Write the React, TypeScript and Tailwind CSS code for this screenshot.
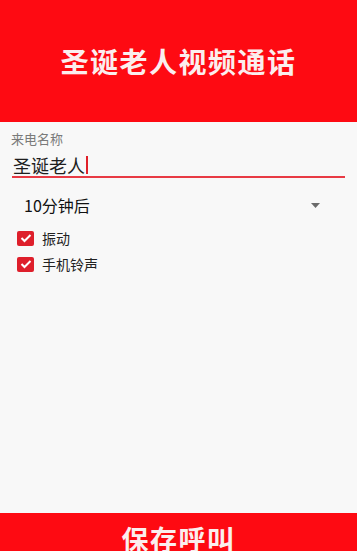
const font = "font-['Noto_Sans_CJK_SC','Noto_Sans',sans-serif]";

function CheckBox({ label }: { label: string }) {
  return (
    <div className="flex items-center h-[26px]">
      <div className="ml-[17px] w-[17px] h-[15px] rounded-[2px] bg-[#de1f2b] flex items-center justify-center">
        <svg width="12" height="10" viewBox="0 0 12 10" fill="none">
          <path d="M1.5 5 L4.5 8 L10.5 2" stroke="#ffffff" strokeWidth="2" />
        </svg>
      </div>
      <span className="ml-[8px] text-[14px] leading-none text-[#222]">{label}</span>
    </div>
  );
}

export default function App() {
  return (
    <div className={`h-[551px] w-full flex flex-col overflow-hidden bg-[#f8f8f8] ${font}`}>
      {/* Header */}
      <div className="h-[122px] bg-[#fe0a12] flex items-center justify-center shrink-0">
        <h1 className="text-[28px] font-bold text-[#fbeeee] tracking-[1.5px] leading-none">
          圣诞老人视频通话
        </h1>
      </div>

      {/* Form */}
      <div className="flex-1 flex flex-col">
        <p className="mt-[10px] ml-[11px] text-[13px] leading-[14px] text-[#7a7a7a]">来电名称</p>
        <div className="mx-[12px] mt-[7px] h-[25px] border-b-2 border-[#e83a44] flex items-center">
          <span className="ml-[1px] text-[18px] leading-none text-[#1e1e1e]">圣诞老人</span>
          <span className="ml-[1px] w-[2px] h-[18px] bg-[#e0202a]" />
        </div>

        <div className="mt-[15px] h-[24px] flex items-center justify-between">
          <span className="ml-[24px] text-[16px] leading-none text-[#111]">10分钟后</span>
          <svg className="mr-[37px]" width="9" height="5" viewBox="0 0 9 5">
            <path d="M0 0 L9 0 L4.5 5 Z" fill="#6b6b6b" />
          </svg>
        </div>

        <div className="mt-[8px] flex flex-col">
          <CheckBox label="振动" />
          <CheckBox label="手机铃声" />
        </div>
      </div>

      {/* Save button */}
      <div className="h-[38px] bg-[#fe0a12] flex justify-center shrink-0">
        <span className="pt-[12px] text-[27px] font-bold leading-none text-[#fbeeee] tracking-[1.5px]">
          保存呼叫
        </span>
      </div>
    </div>
  );
}
